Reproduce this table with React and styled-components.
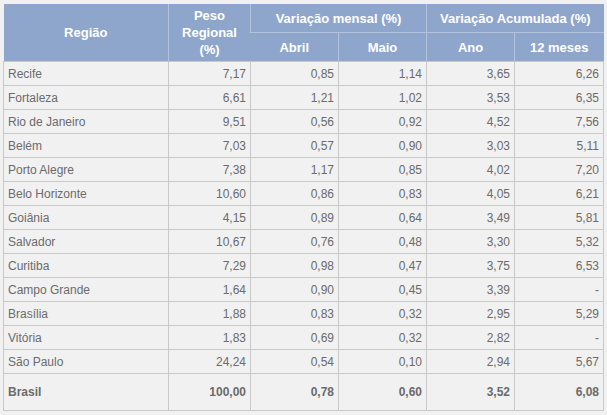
import React from "react";
import styled, { createGlobalStyle } from "styled-components";

const GlobalStyle = createGlobalStyle`
  html, body {
    margin: 0;
    padding: 0;
    background: #f1f1f1;
  }
  body {
    font-family: "Liberation Sans", Arial, Helvetica, sans-serif;
  }
`;

const Wrap = styled.div`
  padding: 4px 0 0 3px;
`;

const Table = styled.table`
  border-collapse: collapse;
  table-layout: fixed;
  width: 600px;
  font-size: 12px;
  color: #6b6b6b;
  background: #f1f1f1;
`;

const Th = styled.th`
  background: #8fa6cc;
  color: #fff;
  font-size: 13px;
  font-weight: bold;
  text-align: center;
  line-height: 17px;
  padding: 0;
  height: ${(p) => p.h || 28}px;
  border-left: 1px solid #b3c2dd;
  border-top: ${(p) => (p.sub ? "1px solid #b3c2dd" : "none")};
  &:first-child {
    border-left: none;
  }
`;

const Td = styled.td`
  height: 23px;
  padding: 0 4px;
  border: 1px solid #c8c8c8;
  text-align: ${(p) => (p.left ? "left" : "right")};
  white-space: nowrap;
`;

const TotalRow = styled.tr`
  td {
    height: 36px;
    font-weight: bold;
  }
`;

const rows = [
  ["Recife", "7,17", "0,85", "1,14", "3,65", "6,26"],
  ["Fortaleza", "6,61", "1,21", "1,02", "3,53", "6,35"],
  ["Rio de Janeiro", "9,51", "0,56", "0,92", "4,52", "7,56"],
  ["Belém", "7,03", "0,57", "0,90", "3,03", "5,11"],
  ["Porto Alegre", "7,38", "1,17", "0,85", "4,02", "7,20"],
  ["Belo Horizonte", "10,60", "0,86", "0,83", "4,05", "6,21"],
  ["Goiânia", "4,15", "0,89", "0,64", "3,49", "5,81"],
  ["Salvador", "10,67", "0,76", "0,48", "3,30", "5,32"],
  ["Curitiba", "7,29", "0,98", "0,47", "3,75", "6,53"],
  ["Campo Grande", "1,64", "0,90", "0,45", "3,39", "-"],
  ["Brasília", "1,88", "0,83", "0,32", "2,95", "5,29"],
  ["Vitória", "1,83", "0,69", "0,32", "2,82", "-"],
  ["São Paulo", "24,24", "0,54", "0,10", "2,94", "5,67"],
];

const total = ["Brasil", "100,00", "0,78", "0,60", "3,52", "6,08"];

const widths = [165, 82, 88, 88, 88, 89];

export default function App() {
  return (
    <Wrap>
      <GlobalStyle />
      <Table>
        <colgroup>
          {widths.map((w, i) => (
            <col key={i} style={{ width: w }} />
          ))}
        </colgroup>
        <thead>
          <tr>
            <Th rowSpan={2}>Região</Th>
            <Th rowSpan={2}>
              Peso
              <br />
              Regional
              <br />
              (%)
            </Th>
            <Th colSpan={2}>Variação mensal (%)</Th>
            <Th colSpan={2}>Variação Acumulada (%)</Th>
          </tr>
          <tr>
            <Th sub h={28}>Abril</Th>
            <Th sub h={28}>Maio</Th>
            <Th sub h={28}>Ano</Th>
            <Th sub h={28}>12 meses</Th>
          </tr>
        </thead>
        <tbody>
          {rows.map((r) => (
            <tr key={r[0]}>
              {r.map((c, i) => (
                <Td key={i} left={i === 0}>
                  {c}
                </Td>
              ))}
            </tr>
          ))}
          <TotalRow>
            {total.map((c, i) => (
              <Td key={i} left={i === 0}>
                {c}
              </Td>
            ))}
          </TotalRow>
        </tbody>
      </Table>
    </Wrap>
  );
}
